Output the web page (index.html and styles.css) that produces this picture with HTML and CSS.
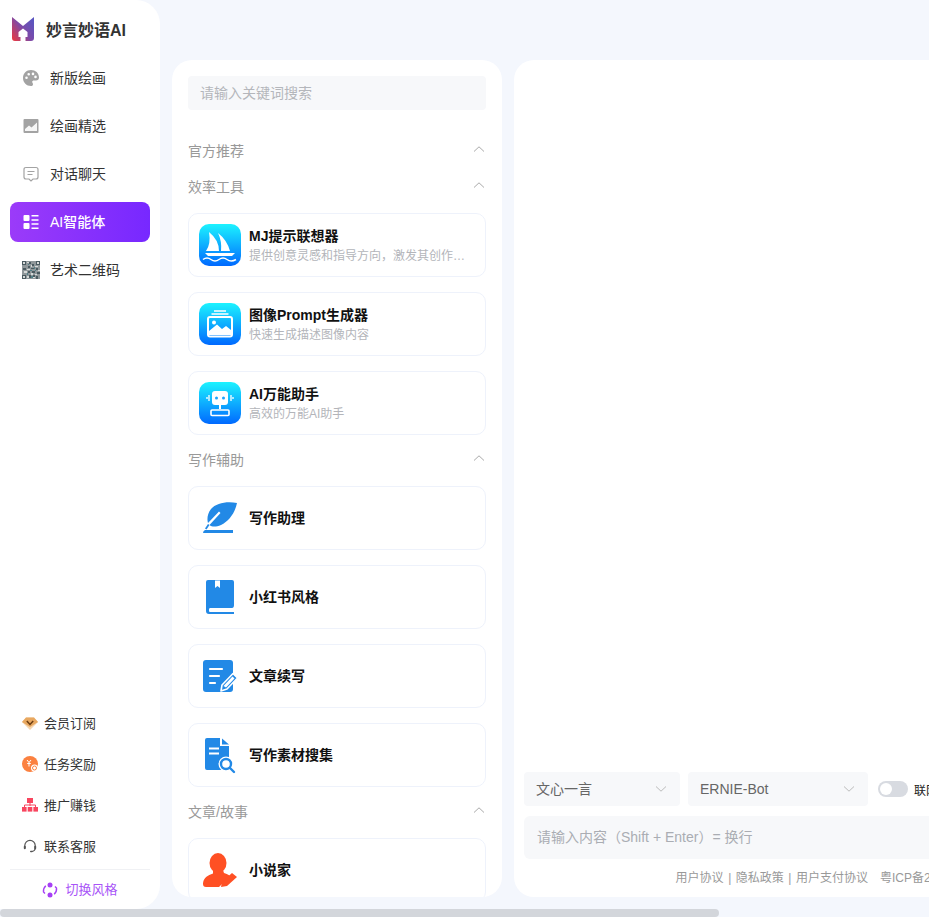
FILE: index.html
```html
<!DOCTYPE HTML>
<html lang="zh-CN">
    <head>
        <meta charset="UTF-8">
        <title>妙言妙语AI</title>
        <link rel="stylesheet" href="styles.css">
    </head>
    <body>
        <svg class="defs" width="0" height="0">
            <defs>
                <linearGradient id="blue" x1="0" y1="0" x2="0" y2="1">
                    <stop offset="0" stop-color="#1cf3ff"/>
                    <stop offset="1" stop-color="#0069ff"/>
                </linearGradient>
                <linearGradient id="logo" x1="0" y1="1" x2="1" y2="0.2">
                    <stop offset="0" stop-color="#f0383a"/>
                    <stop offset="0.55" stop-color="#7d4aa8"/>
                    <stop offset="1" stop-color="#5a55c0"/>
                </linearGradient>
            </defs>
        </svg>
        <div class="app">
            <!-- menu lateral -->
            <aside class="sidebar">
                <div class="logo">
                    <svg width="22" height="24" viewBox="0 0 22 24">
                        <path fill="url(#logo)" d="M0 0L11 9L22 0V21Q22 24 19 24H13.500V20H15.500V15L11 11.500L6.500 15V20H8.500V24H3Q0 24 0 21Z"/>
                    </svg>
                    <span>妙言妙语AI</span>
                </div>
                <nav class="menu">
                    <a class="menu-item">
                        <svg width="18" height="18" viewBox="0 0 18 18">
                            <path fill="#a3a3a3" fill-rule="evenodd" d="M9 1C4.400 1 1 4.400 1 9s3.600 8 8 8c1.400 0 2-.9 2-1.800 0-1.100-.8-1.400-.8-2.300 0-.8.7-1.400 1.600-1.400H14c1.800 0 3-1.200 3-3C17 4 13.500 1 9 1ZM4.500 10a1.300 1.300 0 1 1 0-2.600 1.300 1.300 0 0 1 0 2.600Zm2.200-3.500a1.300 1.300 0 1 1 0-2.600 1.300 1.300 0 0 1 0 2.600Zm4.300-.3a1.300 1.300 0 1 1 0-2.600 1.300 1.300 0 0 1 0 2.600Zm2.500 3a1.300 1.300 0 1 1 0-2.600 1.300 1.300 0 0 1 0 2.600Z"/>
                        </svg>
                        <span>新版绘画</span>
                    </a>
                    <a class="menu-item">
                        <svg width="18" height="18" viewBox="0 0 18 18">
                            <rect x="1.500" y="2" width="15" height="14" rx="1" fill="#a3a3a3"/>
                            <path fill="#fff" d="M3 14V12L7 8.500L9.500 10.500L15 5.500V14Z" opacity=".9"/>
                        </svg>
                        <span>绘画精选</span>
                    </a>
                    <a class="menu-item">
                        <svg width="18" height="18" viewBox="0 0 18 18">
                            <path fill="none" stroke="#a3a3a3" stroke-width="1.200" d="M4 2.500H14Q16 2.500 16 4.500V12Q16 14 14 14H11L9 16L7 14H4Q2 14 2 12V4.500Q2 2.500 4 2.500Z"/>
                            <path stroke="#a3a3a3" stroke-width="1.200" d="M5.500 6.500H12.500M5.500 9.500H10.500"/>
                        </svg>
                        <span>对话聊天</span>
                    </a>
                    <a class="menu-item active">
                        <svg width="18" height="18" viewBox="0 0 18 18">
                            <rect x="1.500" y="2" width="6" height="6" rx="1" fill="#fff"/>
                            <rect x="1.500" y="10" width="6" height="6" rx="1" fill="#fff"/>
                            <path stroke="#fff" stroke-width="1.500" d="M9.500 2.800H16.500M9.500 7H16.500M9.500 11H16.500M9.500 15.200H16.500"/>
                        </svg>
                        <span>AI智能体</span>
                    </a>
                    <a class="menu-item">
                        <svg width="18" height="18" viewBox="0 0 18 18">
                            <rect width="18" height="18" fill="#8f979a"/>
                            <path fill="#4a5a60" d="M0 0h4v4H0zM14 0h4v4h-4zM0 14h4v4H0zM7 1h2v2H7zM10 3h2v2h-2zM6 5h2v2H6zM9 7h3v1H9zM1 7h3v2H1zM14 7h2v2h-2zM6 10h2v2H6zM10 10h3v2h-3zM15 11h3v2h-3zM7 14h2v3H7zM11 14h2v2h-2zM14 15h2v3h-2z"/>
                            <path fill="#d5d9d8" d="M1 1h2v2H1zM15 1h2v2h-2zM1 15h2v2H1zM5 1h2v1H5zM9 4h1v2H9zM5 8h3v1H5zM13 5h3v1h-3zM2 10h3v2H2zM9 12h2v2H9zM13 13h2v1h-2zM5 15h2v2H5zM16 9h2v1h-2zM11 16h2v1h-2z"/>
                            <path fill="#4f7f87" d="M6 3h1v1H6zM12 6h1v2h-1zM8 9h2v1H8zM13 9h1v1h-1zM5 12h1v2H5zM9 15h2v2H9z"/>
                        </svg>
                        <span>艺术二维码</span>
                    </a>
                </nav>
                <div class="links">
                    <a class="link-item">
                        <svg width="16" height="16" viewBox="0 0 16 16">
                            <path fill="#f6d5ae" d="M4 2.500H12L16 7L8 15L0 7Z"/>
                            <path fill="#e8a860" d="M0 7L4 2.500H12L16 7L8 12Z"/>
                            <path fill="none" stroke="#6b3d12" stroke-width="1.500" d="M4.800 6L8 9.500L11.200 6"/>
                        </svg>
                        <span>会员订阅</span>
                    </a>
                    <a class="link-item">
                        <svg width="16" height="16" viewBox="0 0 16 16">
                            <circle cx="8" cy="8" r="8" fill="#fb8140"/>
                            <path fill="none" stroke="#fff" d="M5 4L7 6.500L9 4M7 6.500V10.500M5.200 7.500H8.800"/>
                            <circle cx="12.500" cy="12" r="3.500" fill="#fff"/>
                            <circle cx="12.500" cy="12" r="2" fill="none" stroke="#fb8140"/>
                        </svg>
                        <span>任务奖励</span>
                    </a>
                    <a class="link-item">
                        <svg width="16" height="16" viewBox="0 0 16 16">
                            <rect x="5" y="1" width="6" height="5" fill="#f8455f"/>
                            <path fill="none" stroke="#f8455f" d="M8 6V9M2.500 10V8H13.500V10"/>
                            <rect x="0" y="10" width="4.600" height="4.600" fill="#f8455f"/>
                            <rect x="5.700" y="10" width="4.600" height="4.600" fill="#f8455f"/>
                            <rect x="11.400" y="10" width="4.600" height="4.600" fill="#f8455f"/>
                        </svg>
                        <span>推广赚钱</span>
                    </a>
                    <a class="link-item">
                        <svg width="16" height="16" viewBox="0 0 16 16">
                            <path fill="none" stroke="#555" stroke-width="1.200" d="M2.800 10V7.500A5.200 5.200 0 0 1 13.200 7.500V10.500Q13 13 10 13.500"/>
                            <rect x="1.800" y="7.800" width="2" height="3.400" rx="1" fill="#555"/>
                            <rect x="12.200" y="7.800" width="2" height="3.400" rx="1" fill="#555"/>
                            <rect x="8" y="12.800" width="2.600" height="1.500" rx=".7" fill="#555"/>
                        </svg>
                        <span>联系客服</span>
                    </a>
                </div>
                <div class="switch-style">
                    <svg width="16" height="16" viewBox="0 0 16 16">
                        <circle cx="8" cy="3" r="2.500" fill="#a63ff5"/>
                        <circle cx="8" cy="13" r="2.500" fill="#a63ff5"/>
                        <path fill="none" stroke="#a63ff5" stroke-width="1.400" d="M3.800 3.800Q1 6.500 1.500 10L3 11.500M12.200 12.200Q15 9.500 14.500 6L13 4.500"/>
                    </svg>
                    <span>切换风格</span>
                </div>
            </aside>

            <div class="content">
                <!-- lista de agentes -->
                <section class="panel">
                    <div class="search">请输入关键词搜索</div>

                    <div class="group-title">
                        <span>官方推荐</span>
                        <svg width="12" height="6" viewBox="0 0 12 6"><path fill="none" stroke="#aaa" d="M1 5.500L6 .8L11 5.500"/></svg>
                    </div>

                    <div class="group-title">
                        <span>效率工具</span>
                        <svg width="12" height="6" viewBox="0 0 12 6"><path fill="none" stroke="#aaa" d="M1 5.500L6 .8L11 5.500"/></svg>
                    </div>
                    <div class="group">
                        <div class="card">
                            <svg width="42" height="42" viewBox="0 0 42 42">
                                <rect width="42" height="42" rx="10" fill="url(#blue)"/>
                                <path fill="#fff" d="M10 8Q20 16 20 27H7Q12 20 10 8ZM19 9Q28 16 31 27H22Q23 17 19 9Z"/>
                                <path fill="#fff" d="M6 29H36L33 32H9Z"/>
                                <path fill="none" stroke="#fff" stroke-width="1.500" d="M4 35.500Q8 32.500 12 35.500T20 35.500T28 35.500T37 35.500"/>
                            </svg>
                            <div class="card-text">
                                <div class="card-name">MJ提示联想器</div>
                                <div class="card-desc">提供创意灵感和指导方向，激发其创作灵感的智能助手</div>
                            </div>
                        </div>
                        <div class="card">
                            <svg width="42" height="42" viewBox="0 0 42 42">
                                <rect width="42" height="42" rx="10" fill="url(#blue)"/>
                                <path stroke="#fff" stroke-width="1.500" d="M15 8H27M12.500 11H29.500"/>
                                <rect x="9" y="14" width="24" height="19.500" rx="2" fill="none" stroke="#fff" stroke-width="2"/>
                                <circle cx="15" cy="19.500" r="2" fill="#fff"/>
                                <path fill="#fff" d="M10 32V28L18 21.500L23 26L27 23L32 27V32Z"/>
                            </svg>
                            <div class="card-text">
                                <div class="card-name">图像Prompt生成器</div>
                                <div class="card-desc">快速生成描述图像内容</div>
                            </div>
                        </div>
                        <div class="card">
                            <svg width="42" height="42" viewBox="0 0 42 42">
                                <rect width="42" height="42" rx="10" fill="url(#blue)"/>
                                <rect x="13" y="9" width="16" height="14" rx="3" fill="#fff"/>
                                <circle cx="17.500" cy="16" r="1.500" fill="#1aa4ff"/>
                                <circle cx="24.500" cy="16" r="1.500" fill="#1aa4ff"/>
                                <path stroke="#fff" stroke-width="1.300" d="M10 13V19M8 15V17M32 13V19M34 15V17"/>
                                <path stroke="#fff" stroke-width="2" d="M21 23V27"/>
                                <rect x="12" y="28" width="18" height="5.500" rx="1" fill="none" stroke="#fff" stroke-width="1.600"/>
                            </svg>
                            <div class="card-text">
                                <div class="card-name">AI万能助手</div>
                                <div class="card-desc">高效的万能AI助手</div>
                            </div>
                        </div>
                    </div>

                    <div class="group-title">
                        <span>写作辅助</span>
                        <svg width="12" height="6" viewBox="0 0 12 6"><path fill="none" stroke="#aaa" d="M1 5.500L6 .8L11 5.500"/></svg>
                    </div>
                    <div class="group">
                        <div class="card">
                            <svg width="42" height="42" viewBox="0 0 42 42">
                                <path fill="#2289e6" d="M38 6C28 4 17 6 12 12C8 17 8 23 9 26L20 14.500L21.500 16L10.500 28C13 30 17 30 22 28C30 24 36 16 38 6Z"/>
                                <path fill="#2289e6" d="M9 27L10.500 28L7.500 32.500L6 31.500Z"/>
                                <path fill="#2289e6" d="M6 33H34V36H4Q4 34 6 33Z"/>
                            </svg>
                            <div class="card-name">写作助理</div>
                        </div>
                        <div class="card">
                            <svg width="42" height="42" viewBox="0 0 42 42">
                                <path fill="#2289e6" d="M9 4H33Q35 4 35 6V29Q35 32 33 32H11Q10 32 10 33.500V34.500Q10 36 11 36H35V38H10Q7 38 7 35V6Q7 4 9 4Z"/>
                                <path fill="#fff" d="M16 4.500H21V12L18.500 10L16 12Z"/>
                            </svg>
                            <div class="card-name">小红书风格</div>
                        </div>
                        <div class="card">
                            <svg width="42" height="42" viewBox="0 0 42 42">
                                <rect x="4" y="5" width="30" height="32" rx="3" fill="#2289e6"/>
                                <path stroke="#fff" stroke-width="2.200" stroke-linecap="round" d="M11 14H23M11 21H20M11 28H16"/>
                                <path fill="#2289e6" stroke="#fff" stroke-width="1.600" stroke-linejoin="round" d="M22 36L23 30L34 18.500L38.500 23L28 34Z"/>
                                <path fill="#fff" d="M24.500 31L33.500 21.500L35.500 23.500L27 32.500Z"/>
                            </svg>
                            <div class="card-name">文章续写</div>
                        </div>
                        <div class="card">
                            <svg width="42" height="42" viewBox="0 0 42 42">
                                <path fill="#2289e6" d="M8 4H21V12H30V36H8Q6 36 6 34V6Q6 4 8 4Z"/>
                                <path fill="#2289e6" d="M23 4.500L30 10.500H23Z"/>
                                <path stroke="#fff" stroke-width="2" d="M10 14.500H20M10 19.500H20"/>
                                <circle cx="27" cy="30" r="7.500" fill="#fff"/>
                                <circle cx="27" cy="30" r="5" fill="none" stroke="#2289e6" stroke-width="2.400"/>
                                <path stroke="#2289e6" stroke-width="2.400" stroke-linecap="round" d="M31 34L35 38"/>
                            </svg>
                            <div class="card-name">写作素材搜集</div>
                        </div>
                    </div>

                    <div class="group-title">
                        <span>文章/故事</span>
                        <svg width="12" height="6" viewBox="0 0 12 6"><path fill="none" stroke="#aaa" d="M1 5.500L6 .8L11 5.500"/></svg>
                    </div>
                    <div class="group">
                        <div class="card">
                            <svg width="42" height="42" viewBox="0 0 42 42">
                                <ellipse cx="19" cy="14" rx="8.500" ry="10" fill="#ff5024"/>
                                <path fill="#ff5024" d="M14 21H24L25 24C28 25 30 26 31 27L20 38H7Q4 38 4 35C4 29 9 26 14 24.500Z"/>
                                <path fill="#ff5024" d="M22 38L23 33L33 24L38 28L28 37Z"/>
                            </svg>
                            <div class="card-name">小说家</div>
                        </div>
                    </div>
                </section>

                <!-- area do chat -->
                <main class="chat">
                    <div class="options">
                        <div class="select model">
                            <span>文心一言</span>
                            <svg width="12" height="6" viewBox="0 0 12 6"><path fill="none" stroke="#bbb" d="M1 .5L6 5.200L11 .5"/></svg>
                        </div>
                        <div class="select version">
                            <span>ERNIE-Bot</span>
                            <svg width="12" height="6" viewBox="0 0 12 6"><path fill="none" stroke="#bbb" d="M1 .5L6 5.200L11 .5"/></svg>
                        </div>
                        <div class="toggle"><i></i></div>
                        <span class="toggle-label">联网搜索</span>
                    </div>
                    <div class="prompt">请输入内容（Shift + Enter）= 换行</div>
                    <div class="footer">
                        <span>用户协议 | 隐私政策 | 用户支付协议</span>
                        <span>粤ICP备2023012345号-1</span>
                    </div>
                </main>
            </div>
        </div>
        <div class="scrollbar"><div class="scroll-thumb"></div></div>
    </body>
</html>
```

FILE: styles.css
```css
html{
    overflow: hidden;
    background: #f4f7fd;
}
body{
    margin: 0;
    font-family: "Liberation Sans", "Noto Sans CJK SC", sans-serif;
    color: #333;
}
svg{
    display: block;
    flex: none;
}
.defs{
    position: absolute;
}
.app{
    display: flex;
    width: 1200px;
    height: calc(100vh - 8px);
}
/* barra de rolagem da janela */
.scrollbar{
    position: fixed;
    left: 0;
    right: 0;
    bottom: 0;
    height: 8px;
    background: #f4f7fd;
}
.scroll-thumb{
    width: 719px;
    height: 8px;
    background: #d3d6db;
    border-radius: 4px;
}

/* menu lateral */
.sidebar{
    display: flex;
    flex-direction: column;
    flex: none;
    box-sizing: border-box;
    width: 160px;
    padding: 0 10px;
    background: #fff;
    border-radius: 0 24px 24px 0;
}
.logo{
    display: flex;
    align-items: center;
    gap: 12px;
    height: 58px;
    padding: 0 2px;
    font-size: 16px;
    font-weight: 700;
    color: #333;
}
.menu{
    display: flex;
    flex-direction: column;
    gap: 8px;
    flex: 1;
}
.menu-item{
    display: flex;
    align-items: center;
    gap: 10px;
    height: 40px;
    padding: 0 12px;
    font-size: 14px;
    border-radius: 8px;
}
.menu-item span, .group-title span, .model span, .link-item span, .switch-style span{
    margin-top: -2px;
}
.menu-item.active{
    background: linear-gradient(90deg, #9b3bf9, #7728ff);
    color: #fff;
    font-weight: 500;
}
.links{
    display: flex;
    flex-direction: column;
    gap: 9px;
    padding-bottom: 7px;
    border-bottom: 1px solid #f0f1f4;
}
.link-item{
    display: flex;
    align-items: center;
    gap: 6px;
    height: 32px;
    padding: 0 12px;
    font-size: 13px;
}
.switch-style{
    display: flex;
    align-items: center;
    justify-content: center;
    gap: 7px;
    height: 39px;
    font-size: 13px;
    color: #a855f7;
}

/* lista de agentes */
.content{
    display: flex;
    flex: 1;
    gap: 12px;
    min-width: 0;
    padding: 60px 12px 12px;
}
.panel{
    flex: none;
    box-sizing: border-box;
    width: 330px;
    padding: 16px 16px 0;
    background: #fff;
    border-radius: 20px;
    overflow: hidden;
}
.search{
    height: 34px;
    margin-bottom: 23px;
    padding: 0 12px;
    background: #f7f8fa;
    border-radius: 4px;
    font-size: 14px;
    line-height: 34px;
    color: #b4b6bb;
}
.group-title{
    display: flex;
    align-items: center;
    justify-content: space-between;
    height: 36px;
    padding-right: 1px;
    font-size: 14px;
    color: #999;
}
.group-title svg{
    margin-top: -4px;
}
.group{
    display: flex;
    flex-direction: column;
    gap: 15px;
    padding: 8px 0 7px;
}
.card{
    display: flex;
    align-items: center;
    gap: 8px;
    box-sizing: border-box;
    height: 64px;
    padding: 0 10px;
    border: 1px solid #eef2fb;
    border-radius: 10px;
}
.card-text{
    min-width: 0;
    padding: 2px 0 1px;
}
.card-name{
    font-size: 14px;
    font-weight: 700;
    line-height: 20px;
    color: #111;
}
.card-desc{
    overflow: hidden;
    width: 218px;
    margin-top: 1px;
    font-size: 12px;
    line-height: 18px;
    color: #b3b5ba;
    white-space: nowrap;
    text-overflow: ellipsis;
}

/* area do chat */
.chat{
    display: flex;
    flex: 1;
    flex-direction: column;
    justify-content: flex-end;
    min-width: 0;
    padding: 0 10px;
    background: #fff;
    border-radius: 20px;
}
.options{
    display: flex;
    align-items: center;
    gap: 8px;
    margin-bottom: 10px;
}
.select{
    display: flex;
    align-items: center;
    justify-content: space-between;
    box-sizing: border-box;
    height: 34px;
    padding: 0 13px 0 12px;
    background: #f7f8fa;
    border-radius: 4px;
    font-size: 14px;
    color: #666;
}
.model{
    width: 156px;
}
.version{
    width: 180px;
}
.toggle{
    box-sizing: border-box;
    width: 30px;
    height: 16px;
    margin-left: 2px;
    padding: 2px;
    background: #d8dbe1;
    border-radius: 8px;
}
.toggle i{
    display: block;
    width: 12px;
    height: 12px;
    background: #fff;
    border-radius: 50%;
}
.toggle-label{
    margin-left: -2px;
    font-size: 12px;
    color: #222;
}
.prompt{
    height: 43px;
    padding: 0 13px;
    background: #f7f8fa;
    border-radius: 6px;
    font-size: 14px;
    line-height: 43px;
    color: #aaadb3;
}
.footer{
    display: flex;
    justify-content: center;
    gap: 12px;
    padding: 11px 13px 11px 0;
    font-size: 12px;
    line-height: 16px;
    word-spacing: 1.200px;
    color: #999;
}
```
